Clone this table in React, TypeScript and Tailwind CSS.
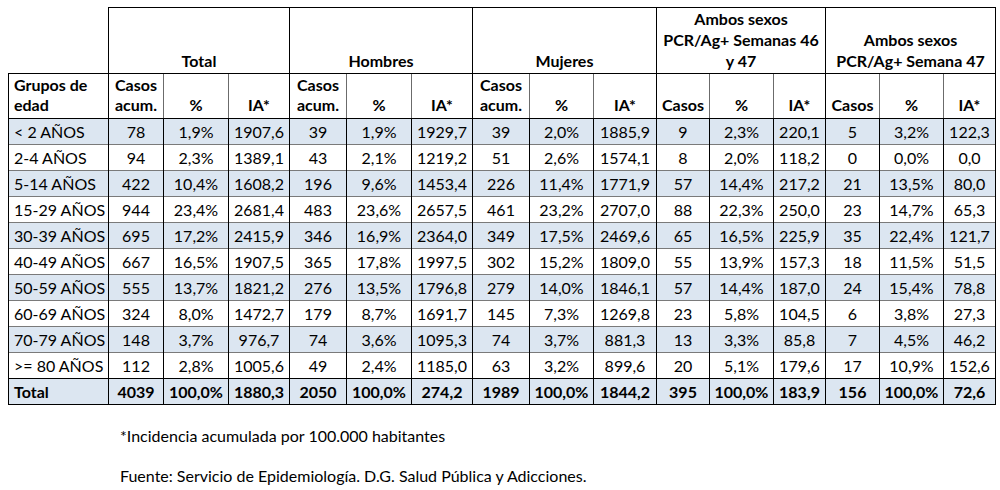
const rows: [string, ...string[]][] = [
  ["< 2 AÑOS", "78", "1,9%", "1907,6", "39", "1,9%", "1929,7", "39", "2,0%", "1885,9", "9", "2,3%", "220,1", "5", "3,2%", "122,3"],
  ["2-4 AÑOS", "94", "2,3%", "1389,1", "43", "2,1%", "1219,2", "51", "2,6%", "1574,1", "8", "2,0%", "118,2", "0", "0,0%", "0,0"],
  ["5-14 AÑOS", "422", "10,4%", "1608,2", "196", "9,6%", "1453,4", "226", "11,4%", "1771,9", "57", "14,4%", "217,2", "21", "13,5%", "80,0"],
  ["15-29 AÑOS", "944", "23,4%", "2681,4", "483", "23,6%", "2657,5", "461", "23,2%", "2707,0", "88", "22,3%", "250,0", "23", "14,7%", "65,3"],
  ["30-39 AÑOS", "695", "17,2%", "2415,9", "346", "16,9%", "2364,0", "349", "17,5%", "2469,6", "65", "16,5%", "225,9", "35", "22,4%", "121,7"],
  ["40-49 AÑOS", "667", "16,5%", "1907,5", "365", "17,8%", "1997,5", "302", "15,2%", "1809,0", "55", "13,9%", "157,3", "18", "11,5%", "51,5"],
  ["50-59 AÑOS", "555", "13,7%", "1821,2", "276", "13,5%", "1796,8", "279", "14,0%", "1846,1", "57", "14,4%", "187,0", "24", "15,4%", "78,8"],
  ["60-69 AÑOS", "324", "8,0%", "1472,7", "179", "8,7%", "1691,7", "145", "7,3%", "1269,8", "23", "5,8%", "104,5", "6", "3,8%", "27,3"],
  ["70-79 AÑOS", "148", "3,7%", "976,7", "74", "3,6%", "1095,3", "74", "3,7%", "881,3", "13", "3,3%", "85,8", "7", "4,5%", "46,2"],
  [">= 80 AÑOS", "112", "2,8%", "1005,6", "49", "2,4%", "1185,0", "63", "3,2%", "899,6", "20", "5,1%", "179,6", "17", "10,9%", "152,6"],
];

const total = ["Total", "4039", "100,0%", "1880,3", "2050", "100,0%", "274,2", "1989", "100,0%", "1844,2", "395", "100,0%", "183,9", "156", "100,0%", "72,6"];

const widths = [100, 55, 65, 61, 57, 65, 61, 57, 64, 63, 53, 64, 52, 54, 64, 52];

// first column of each group gets the dark separator on its left
const groupStart = (i: number) => i === 1 || i === 4 || i === 7 || i === 10 || i === 13;

function Cell({ i, children, bold }: { i: number; children: string; bold?: boolean }) {
  const left = i === 0 || groupStart(i) ? "border-l-black" : "border-l-[#6b6b6b]";
  return (
    <td
      className={`h-[26px] whitespace-nowrap border-l border-r border-r-black ${left} p-0 leading-none ${
        i === 0 ? "pl-[5px] text-left" : "text-center"
      } ${bold ? "font-bold" : ""}`}
    >
      {children}
    </td>
  );
}

export default function App() {
  return (
    <div
      className="h-[490px] w-[1000px] bg-white pl-[8px] pt-[7px] text-[16px] text-black"
      style={{ fontFamily: "Lato, 'Open Sans', sans-serif" }}
    >
      <table className="table-fixed border-collapse">
        <colgroup>
          {widths.map((w, i) => (
            <col key={i} style={{ width: w }} />
          ))}
        </colgroup>
        <thead>
          <tr className="h-[65px] font-bold">
            <th className="border-0 p-0" />
            <th colSpan={3} className="border border-black p-0 pb-[2px] align-bottom leading-[21px]">Total</th>
            <th colSpan={3} className="border border-black p-0 pb-[2px] align-bottom leading-[21px]">Hombres</th>
            <th colSpan={3} className="border border-black p-0 pb-[2px] align-bottom leading-[21px]">Mujeres</th>
            <th colSpan={3} className="whitespace-nowrap border border-black p-0 pb-[2px] align-bottom leading-[21px]">
              Ambos sexos
              <br />
              PCR/Ag+ Semanas 46
              <br />y 47
            </th>
            <th colSpan={3} className="whitespace-nowrap border border-black p-0 pb-[2px] align-bottom leading-[21px]">
              Ambos sexos
              <br />
              PCR/Ag+ Semana 47
            </th>
          </tr>
          <tr className="h-[45px] font-bold">
            <th className="border border-black pl-[5px] pb-[3px] text-left align-bottom leading-[20px]">
              Grupos de
              <br />
              edad
            </th>
            <SubHead acum />
            <SubHead acum />
            <SubHead acum />
            <SubHead />
            <SubHead />
          </tr>
        </thead>
        <tbody>
          {rows.map((r, ri) => (
            <tr
              key={r[0]}
              className={`${ri % 2 === 0 ? "bg-[#dce6f1]" : "bg-white"} border-t border-t-[#7a7a7a]`}
            >
              {r.map((v, i) => (
                <Cell key={i} i={i}>
                  {v}
                </Cell>
              ))}
            </tr>
          ))}
          <tr className="border-t border-b border-t-black border-b-black bg-[#dce6f1]">
            {total.map((v, i) => (
              <Cell key={i} i={i} bold>
                {v}
              </Cell>
            ))}
          </tr>
        </tbody>
      </table>

      <div className="pl-[112px] pt-[21px] leading-[20px]">
        <p>*Incidencia acumulada por 100.000 habitantes</p>
        <p className="pt-[20px]">Fuente: Servicio de Epidemiología. D.G. Salud Pública y Adicciones.</p>
      </div>
    </div>
  );
}

function SubHead({ acum }: { acum?: boolean }) {
  return (
    <>
      <th className="whitespace-nowrap border border-black border-r-[#6b6b6b] p-0 pb-[3px] align-bottom leading-[20px]">
        {acum ? (
          <>
            Casos
            <br />
            acum.
          </>
        ) : (
          "Casos"
        )}
      </th>
      <th className="border border-black border-x-[#6b6b6b] p-0 pb-[3px] align-bottom leading-[20px]">%</th>
      <th className="border border-black border-l-[#6b6b6b] p-0 pb-[3px] align-bottom leading-[20px]">IA*</th>
    </>
  );
}
